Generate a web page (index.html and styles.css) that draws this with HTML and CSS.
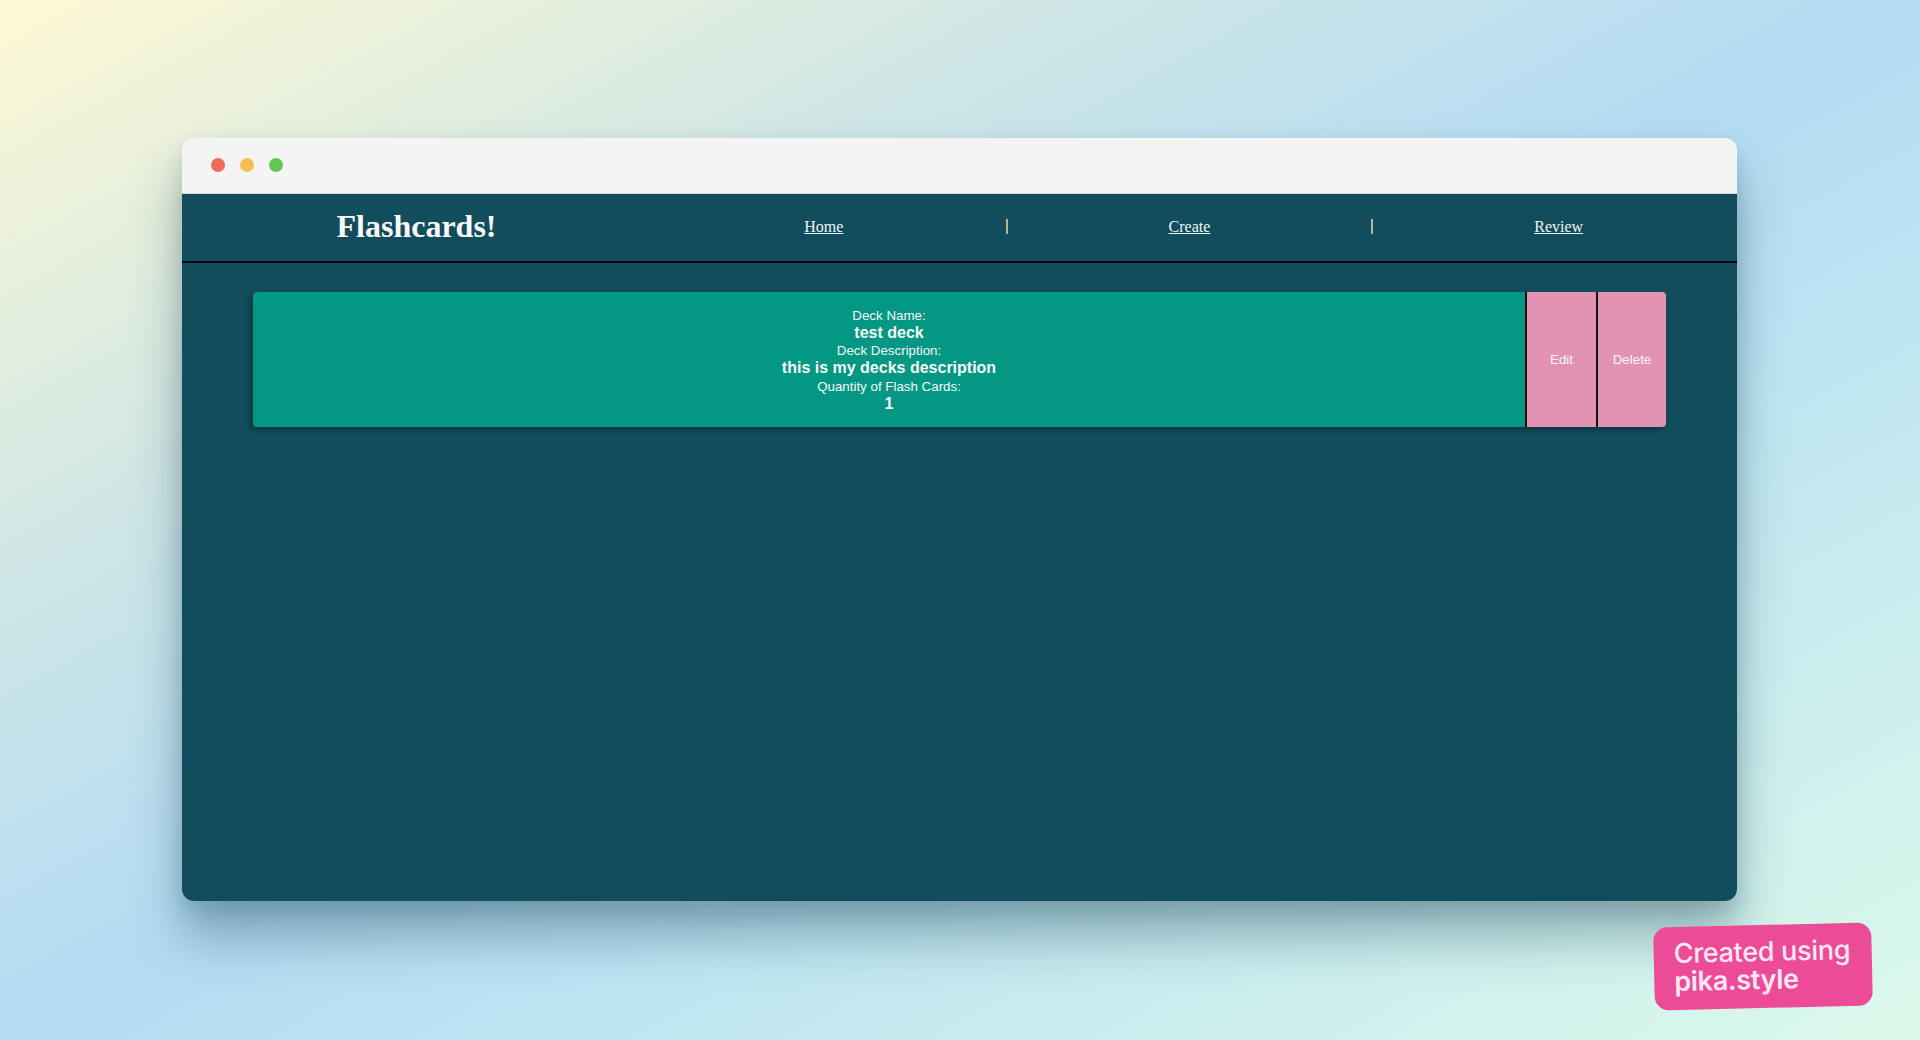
FILE: index.html
```html
<!DOCTYPE html>
<html lang="en">
<head>
<meta charset="utf-8">
<title>Flashcards!</title>
<link rel="stylesheet" href="styles.css">
</head>
<body>
<div class="stage">
  <div class="window">
    <div class="titlebar">
      <span class="dot dot-red"></span>
      <span class="dot dot-yellow"></span>
      <span class="dot dot-green"></span>
    </div>
    <div class="app">
      <header class="header">
        <h1 class="brand">Flashcards!</h1>
        <a class="nav-link" href="#">Home</a>
        <span class="sep"></span>
        <a class="nav-link" href="#">Create</a>
        <span class="sep"></span>
        <a class="nav-link nav-last" href="#">Review</a>
      </header>
      <main class="content">
        <div class="deck">
          <div class="deck-info">
            <div class="label">Deck Name:</div>
            <div class="value">test deck</div>
            <div class="label">Deck Description:</div>
            <div class="value">this is my decks description</div>
            <div class="label">Quantity of Flash Cards:</div>
            <div class="value">1</div>
          </div>
          <button class="deck-btn btn-edit">Edit</button>
          <button class="deck-btn btn-delete">Delete</button>
        </div>
      </main>
    </div>
  </div>
  <div class="badge">Created using<br><span class="badge-strong">pika.style</span></div>
</div>
</body>
</html>
```
FILE: styles.css
```css
* { box-sizing: border-box; }
html, body {
  margin: 0;
  padding: 0;
  width: 1920px;
  height: 1040px;
  overflow: hidden;
}
body {
  font-family: "Liberation Sans", Arial, sans-serif;
}
.stage {
  position: relative;
  width: 1920px;
  height: 1040px;
  padding: 138px 183px 0 182px;
  background: linear-gradient(to bottom right, #fef9d4 0%, #cfe6e6 28%, #b2dcf4 50%, #c4e9f0 72%, #dcf9ea 100%);
}
.window {
  width: 1555px;
  height: 763px;
  border-radius: 12px;
  overflow: hidden;
  display: flex;
  flex-direction: column;
  box-shadow: 0 36px 50px rgba(20, 60, 80, 0.35), 0 10px 20px rgba(20, 60, 80, 0.15);
}
.titlebar {
  height: 56px;
  background: #f4f4f4;
  display: flex;
  align-items: center;
  gap: 15px;
  padding-left: 29px;
  padding-bottom: 1px;
  border-bottom: 1px solid #d6d6d6;
}
.dot {
  width: 14px;
  height: 14px;
  border-radius: 50%;
}
.dot-red { background: #ee6b5e; }
.dot-yellow { background: #f5be4f; }
.dot-green { background: #62c554; }
.app {
  flex: 1;
  background: #114d5c;
  display: flex;
  flex-direction: column;
}
.header {
  height: 69px;
  border-bottom: 2px solid #050808;
  display: grid;
  grid-template-columns: 460px 1fr 2px 1fr 2px 1fr;
  align-items: center;
  padding-bottom: 2px;
}
.brand {
  margin: 0;
  padding-left: 9px;
  font-family: "Liberation Serif", "Times New Roman", serif;
  font-weight: bold;
  font-size: 32px;
  color: #f8f8f8;
  text-align: center;
}
.nav-link {
  font-family: "Liberation Serif", "Times New Roman", serif;
  font-size: 16px;
  color: #eef4f6;
  text-decoration: underline;
  text-align: center;
  justify-self: center;
}
.nav-last {
  margin-left: 7px;
}
.sep {
  width: 2px;
  height: 15px;
  background: #b3b895;
}
.content {
  padding: 29px 71px 0 71px;
}
.deck {
  display: flex;
  height: 135px;
  border-radius: 4px;
  overflow: hidden;
  box-shadow: -3px 3px 6px rgba(0, 0, 0, 0.3);
}
.deck-info {
  flex: 1;
  background: #039784;
  color: #f7f7f7;
  display: flex;
  flex-direction: column;
  justify-content: center;
  align-items: center;
  text-align: center;
  padding-top: 1px;
}
.label {
  font-size: 13.33px;
  line-height: 17px;
}
.value {
  font-size: 16px;
  font-weight: bold;
  line-height: 18.5px;
}
.deck-btn {
  background: #e293b3;
  color: #fbf3f6;
  border: none;
  border-left: 2px solid #111;
  font-family: "Liberation Sans", Arial, sans-serif;
  font-size: 13.33px;
  padding: 0;
  margin: 0;
}
.btn-edit { width: 71px; }
.btn-delete { width: 70px; }
.badge {
  position: absolute;
  left: 1654px;
  top: 925px;
  width: 218px;
  height: 83px;
  padding: 13px 20px;
  background: #ec4b98;
  color: #fde8f2;
  border-radius: 14px;
  transform: rotate(-1.3deg);
  font-family: Inter, "Noto Sans", sans-serif;
  font-size: 27px;
  font-weight: 500;
  line-height: 28px;
  letter-spacing: -0.3px;
}
.badge-strong {
  font-weight: 600;
}
```
